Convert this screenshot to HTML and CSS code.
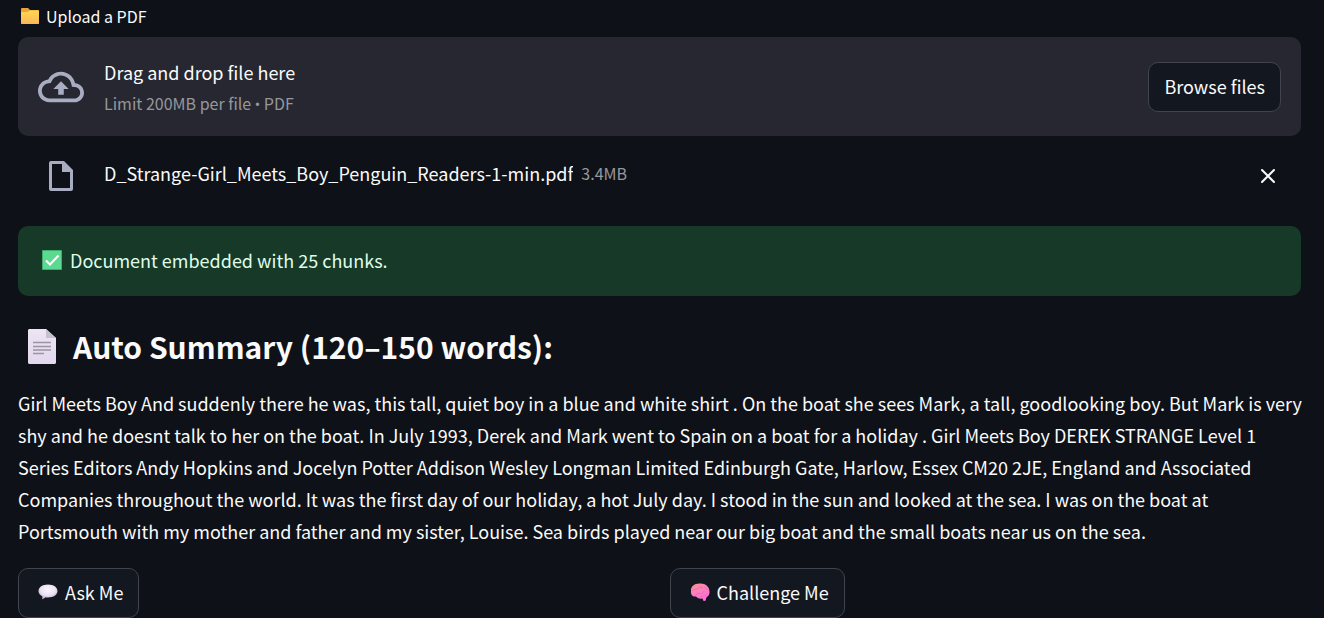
FILE: index.html
```html
<!DOCTYPE html>
<html lang="en">
<head>
<meta charset="utf-8">
<meta name="viewport" content="width=device-width, initial-scale=1">
<title>PDF Summary</title>
<link rel="stylesheet" href="styles.css">
</head>
<body>
<main class="page">
  <label class="upload-label" for="pdf-file">
    <svg class="emoji-small" viewBox="0 0 18 18" aria-hidden="true">
      <defs><linearGradient id="folder" x1="0" y1="0" x2="0" y2="1"><stop offset="0" stop-color="#ffd84f"/><stop offset="1" stop-color="#fdb55e"/></linearGradient></defs>
      <path d="M0 2Q0 1 1 1H7L9 3H17Q18 3 18 4V8H0Z" fill="#e9a53a"/>
      <path d="M0 5H6.500L9 3.500H17.500L18 4V16.500L17.500 17H.5L0 16.500Z" fill="url(#folder)"/>
    </svg>
    <span>Upload a PDF</span>
  </label>

  <section class="dropzone">
    <svg class="cloud-icon" viewBox="0 0 24 24" aria-hidden="true">
      <path fill="currentColor" d="M19.350 10.040C18.670 6.590 15.640 4 12 4 9.110 4 6.600 5.640 5.350 8.040 2.340 8.360 0 10.910 0 14c0 3.310 2.690 6 6 6h13c2.760 0 5-2.240 5-5 0-2.640-2.050-4.780-4.650-4.960zM19 18H6c-2.210 0-4-1.790-4-4 0-2.050 1.530-3.760 3.560-3.970l1.070-.11.5-.95C8.080 7.140 9.940 6 12 6c2.620 0 4.880 1.860 5.390 4.430l.3 1.500 1.530.11c1.560.1 2.780 1.410 2.780 2.960 0 1.650-1.350 3-3 3zM8 13h2.550v3h2.900v-3H16l-4-4z"/>
    </svg>
    <div class="drop-text">
      <span>Drag and drop file here</span>
      <span class="muted">Limit 200MB per file <span class="bullet">•</span> PDF</span>
    </div>
    <input class="file-input" id="pdf-file" type="file" accept=".pdf" tabindex="-1">
    <button class="button" type="button">Browse files</button>
  </section>

  <div class="file-row">
    <svg class="file-icon" viewBox="0 0 24 30" aria-hidden="true">
      <path fill="currentColor" fill-rule="evenodd" d="M2 0H15L24 9V28Q24 30 22 30H2Q0 30 0 28V2Q0 0 2 0ZM3 3V27H21V11H13V3Z"/>
    </svg>
    <div class="file-info">
      <span class="file-name">D_Strange-Girl_Meets_Boy_Penguin_Readers-1-min.pdf</span>
      <span class="muted">3.4MB</span>
    </div>
    <button class="remove" type="button" aria-label="Remove file">
      <svg class="remove-icon" viewBox="0 0 14 14" aria-hidden="true"><path d="M1 1L13 13M13 1L1 13" fill="none" stroke="currentColor" stroke-width="2" stroke-linecap="round"/></svg>
    </button>
  </div>

  <div class="success" role="status">
    <svg class="emoji" viewBox="0 0 20 20" aria-hidden="true">
      <rect width="20" height="20" rx="1" fill="#3fae6c"/><rect x="1" y="1" width="18" height="18" fill="#5bd991"/>
      <path d="M4 10.500L8 14.500L16.500 5.500" fill="none" stroke="#fff" stroke-width="2"/>
    </svg>
    <span>Document embedded with 25 chunks.</span>
  </div>

  <h2 class="heading">
    <svg class="page-icon" viewBox="0 0 28 35" aria-hidden="true">
      <defs><linearGradient id="sheet" x1="0" y1="0" x2="0" y2="1"><stop offset="0" stop-color="#ece5f3"/><stop offset="1" stop-color="#e2d7ed"/></linearGradient></defs>
      <path d="M1 0H18L28 9V34L27 35H1L0 34V1Z" fill="url(#sheet)"/>
      <path d="M18 0L28 9H18Z" fill="#c6bfcd"/>
      <path d="M5 13.500H23M5 17.500H23M5 21H23M5 24.500H16" stroke="#9c93a5" stroke-width="1.300"/>
    </svg>
    <span>Auto Summary (120–150 words):</span>
  </h2>

  <p class="summary">Girl Meets Boy And suddenly there he was, this tall, quiet boy in a blue and white shirt . On the boat she sees Mark, a tall, goodlooking boy. But Mark is very shy and he doesnt talk to her on the boat. In July 1993, Derek and Mark went to Spain on a boat for a holiday . Girl Meets Boy DEREK STRANGE Level 1 Series Editors Andy Hopkins and Jocelyn Potter Addison Wesley Longman Limited Edinburgh Gate, Harlow, Essex CM20 2JE, England and Associated Companies throughout the world. It was the first day of our holiday, a hot July day. I stood in the sun and looked at the sea. I was on the boat at Portsmouth with my mother and father and my sister, Louise. Sea birds played near our big boat and the small boats near us on the sea.</p>

  <div class="actions">
    <div>
      <button class="button" type="button">
        <svg class="emoji" viewBox="0 0 20 20" aria-hidden="true">
          <defs><radialGradient id="bubble" cx=".5" cy=".35" r=".65"><stop offset="0" stop-color="#fbf7ff"/><stop offset=".6" stop-color="#ebe1f3"/><stop offset="1" stop-color="#bda8cf"/></radialGradient></defs>
          <path d="M10 2.500C15.500 2.500 19.500 5.300 19.500 9S15.500 15.500 10 15.500C9 15.500 8.300 15.400 7.500 15.300C6.500 16.500 5.200 17 3.800 17.200C4.500 16.200 4.600 15 4.200 14.200C1.800 12.900.5 11.100.5 9C.5 5.300 4.500 2.500 10 2.500Z" fill="url(#bubble)"/>
        </svg>
        <span>Ask Me</span>
      </button>
    </div>
    <div>
      <button class="button" type="button">
        <svg class="emoji" viewBox="0 0 20 20" aria-hidden="true">
          <defs><linearGradient id="brain" x1="0" y1="0" x2=".4" y2="1"><stop offset="0" stop-color="#ff9199"/><stop offset="1" stop-color="#fb70d9"/></linearGradient></defs>
          <path d="M1 9C.5 5 4 1.500 9.500 1.500C15 1 19.500 4.500 19.500 9.500C19.800 12 18.500 14.500 16.500 15.200L15.500 18.800L13.500 19L12.500 16.500C9.500 17 7 16 6 14.500C3 15 .5 13 1 9Z" fill="url(#brain)"/>
          <path d="M2 9C4 6.500 6.500 8 8 6.500S12 5 13 6M5.500 14C6 11.500 8 11 10 11.500S14 10.500 14 9M10 14.500C13 14.500 16 14 17 11.500M15 4.500C15 6.500 17 7.500 18.500 8" fill="none" stroke="#e866b4" stroke-width=".8"/>
        </svg>
        <span>Challenge Me</span>
      </button>
    </div>
  </div>
</main>
</body>
</html>
```
FILE: styles.css
```css
* {
  box-sizing: border-box;
}

body {
  margin: 0;
  background: #0e1117;
  color: #fafafa;
  font-family: "Noto Sans CJK SC", "Noto Sans", sans-serif;
  font-size: 18px;
  line-height: 32px;
}

.page {
  padding: 3px 23px 0 18px;
}

.upload-label {
  display: flex;
  align-items: center;
  gap: 7px;
  padding: 0 3px;
  margin-bottom: 8px;
  font-size: 16px;
  line-height: 26px;
}

.emoji-small {
  width: 18px;
  height: 18px;
}

.emoji {
  flex: none;
  width: 20px;
  height: 20px;
}

.dropzone {
  display: flex;
  align-items: center;
  padding: 17px 20px;
  border-radius: 10px;
  background: #262730;
}

.cloud-icon {
  flex: none;
  width: 46px;
  height: 46px;
  margin-right: 20px;
  color: #a9adc1;
}

.drop-text {
  display: flex;
  flex: 1;
  flex-direction: column;
  padding-top: 3px;
  line-height: 31px;
}

.dropzone {
  padding-bottom: 16px;
}

.muted {
  color: #96979d;
  font-size: 16px;
}

.bullet {
  font-family: Roboto, sans-serif;
}

.file-input {
  position: absolute;
  width: 1px;
  height: 1px;
  opacity: 0;
}

.button {
  display: inline-flex;
  align-items: center;
  gap: 7px;
  padding: 7px 15px 9px;
  border: 1px solid #41444c;
  border-radius: 10px;
  background: #131720;
  color: inherit;
  font: inherit;
  white-space: nowrap;
}

.file-row {
  display: flex;
  align-items: center;
  padding: 21px 20px 0 31px;
  margin-bottom: 31px;
}

.file-icon {
  flex: none;
  width: 24px;
  height: 30px;
  margin-right: 31px;
  color: #a9adc1;
}

.file-info {
  display: flex;
  flex: 1;
  gap: 8px;
  min-width: 0;
  padding-bottom: 6px;
}

.file-name {
  overflow: hidden;
  text-overflow: ellipsis;
}

.remove {
  display: flex;
  padding: 6px;
  border: 0;
  background: none;
  color: inherit;
}

.remove-icon {
  width: 14px;
  height: 14px;
}

.success {
  display: flex;
  align-items: center;
  gap: 8px;
  padding: 18px 24px 20px;
  border-radius: 10px;
  background: #173928;
  color: #dffde9;
}

.heading {
  display: flex;
  align-items: center;
  gap: 17px;
  padding-left: 10px;
  margin: 29px 0 20px;
  font-size: 30px;
  font-weight: 600;
  line-height: 42px;
}

.page-icon {
  flex: none;
  width: 28px;
  height: 35px;
}

.summary {
  margin: 0 -10px 21px 0;
}

.actions {
  display: grid;
  grid-template-columns: 1fr 1fr;
  gap: 20px;
}

.actions .button {
  padding-left: 19px;
}
```
